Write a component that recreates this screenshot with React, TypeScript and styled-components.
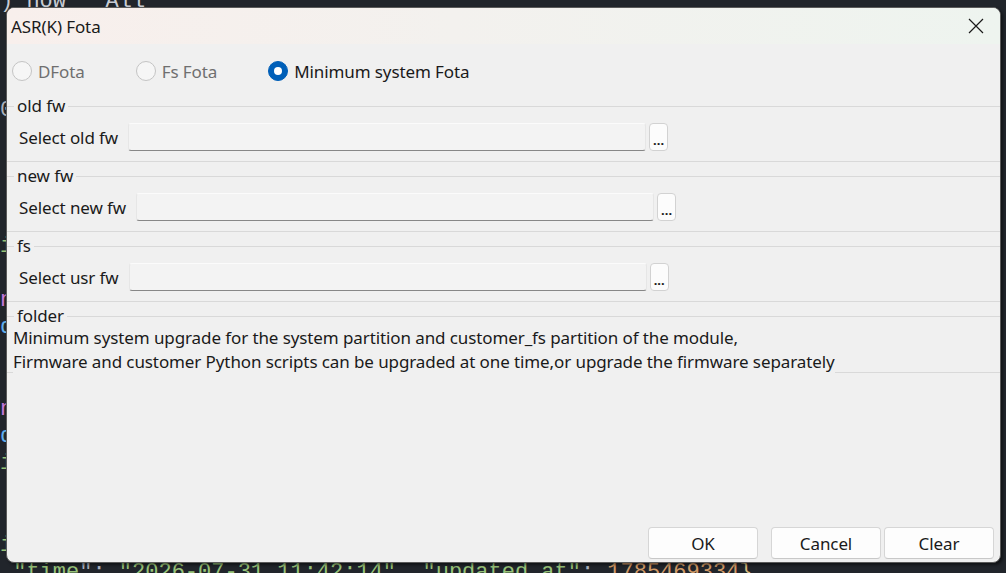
import React from 'react';
import styled, { createGlobalStyle } from 'styled-components';

const GlobalStyle = createGlobalStyle`
  html, body {
    margin: 0;
    padding: 0;
    background: #21252b;
  }
`;

const Desktop = styled.div`
  position: relative;
  width: 1006px;
  height: 573px;
  overflow: hidden;
  background: #21252b;
`;

const Editor = styled.pre`
  margin: -12px 0 0;
  font-family: "Liberation Mono", "DejaVu Sans Mono", monospace;
  font-size: 22px;
  line-height: 27.2px;
  color: #abb2bf;
  white-space: pre;
`;

const CodeLine = styled.div`
  height: 27.2px;
`;

const Token = styled.span<{ $c: string }>`
  color: ${p => p.$c};
`;

const Window = styled.div`
  position: absolute;
  left: 6px;
  top: 7px;
  width: 995px;
  height: 556px;
  box-sizing: border-box;
  border: 1px solid #5a5a5a;
  border-radius: 8px;
  background: #f0f0f0;
  box-shadow: 2px 2px 3px rgba(0, 0, 0, 0.5);
  overflow: hidden;
  display: flex;
  flex-direction: column;
  font-family: "Noto Sans", "Open Sans", sans-serif;
  font-size: 17px;
  letter-spacing: -0.1px;
  color: #1a1a1a;
`;

const TitleBar = styled.div`
  height: 36px;
  flex: none;
  display: flex;
  align-items: center;
  justify-content: space-between;
  padding: 0 16px 0 4px;
  background: linear-gradient(90deg, #f8efec 0%, #f3f1ee 45%, #eef4ef 100%);
`;

const CloseButton = styled.button`
  border: none;
  background: none;
  padding: 0;
  width: 16px;
  height: 16px;
  display: flex;
  color: #1a1a1a;
`;

const Body = styled.div`
  flex: 1;
  display: flex;
  flex-direction: column;
  padding: 15px 0 3px;
`;

const ModeRow = styled.div`
  display: flex;
  align-items: center;
  gap: 51px;
  height: 24px;
  padding-left: 5px;
  margin-bottom: 13px;
`;

const RadioItem = styled.label<{ $disabled?: boolean }>`
  display: flex;
  align-items: center;
  gap: 6px;
  color: ${p => (p.$disabled ? '#6f6f6f' : '#1a1a1a')};
`;

const RadioDot = styled.span<{ $checked?: boolean }>`
  width: 20px;
  height: 20px;
  box-sizing: border-box;
  border-radius: 50%;
  display: flex;
  align-items: center;
  justify-content: center;
  background: ${p => (p.$checked ? '#005fb8' : '#f6f6f6')};
  border: 1px solid ${p => (p.$checked ? '#005fb8' : '#c4c4c4')};

  &::after {
    content: '';
    width: 8px;
    height: 8px;
    border-radius: 50%;
    background: #ffffff;
    display: ${p => (p.$checked ? 'block' : 'none')};
  }
`;

const Group = styled.fieldset<{ $flush?: boolean }>`
  margin: 0;
  min-width: 0;
  padding: ${p => (p.$flush ? '0' : '7px 0 10px')};
  border: none;
  border-top: 1px solid #d9d9d9;
  border-bottom: 1px solid #d9d9d9;

  & + & {
    margin-top: 4px;
  }
`;

const GroupTitle = styled.legend`
  margin-left: 7px;
  padding: 0 3px;
  line-height: 20px;
`;

const FileRow = styled.div`
  display: flex;
  align-items: center;
  height: 28px;
  padding-left: 12px;
`;

const FieldLabel = styled.span`
  margin-right: 10px;
  white-space: nowrap;
`;

const PathInput = styled.div`
  width: 518px;
  height: 28px;
  box-sizing: border-box;
  background: #f3f3f3;
  border: 1px solid #e6e6e6;
  border-top-color: #fbfbfb;
  border-bottom-color: #878787;
  border-radius: 3px;
`;

const BrowseButton = styled.button`
  margin-left: 3px;
  width: 19px;
  height: 28px;
  padding: 0 0 5px;
  box-sizing: border-box;
  display: flex;
  align-items: flex-end;
  justify-content: center;
  background: #fcfcfc;
  border: 1px solid #d2d2d2;
  border-radius: 4px;
  font-family: "Noto Sans", sans-serif;
  font-size: 13px;
  font-weight: bold;
  line-height: 10px;
  color: #1a1a1a;
`;

const Note = styled.p`
  margin: 0 0 -2px 6px;
  width: fit-content;
  background: #f0f0f0;
  line-height: 24px;
`;

const Footer = styled.div`
  margin-top: auto;
  display: flex;
  justify-content: flex-end;
  gap: 3px;
  padding-right: 6px;
`;

const DialogButton = styled.button<{ $spaced?: boolean }>`
  width: 110px;
  height: 32px;
  margin-right: ${p => (p.$spaced ? '10px' : '0')};
  background: #fdfdfd;
  border: 1px solid #d6d6d6;
  border-bottom-color: #c8c8c8;
  border-radius: 4px;
  font-family: "Noto Sans", sans-serif;
  font-size: 17px;
  letter-spacing: -0.1px;
  color: #1a1a1a;
  padding: 0;
`;

type Seg = [string, string];

const plain = '#abb2bf';
const green = '#98c379';
const purple = '#c678dd';
const blue = '#61afef';
const orange = '#d19a66';

// editor buffer sitting behind the dialog
const codeLines: Seg[][] = [
  [[') now   All', '#c8ccd4']],
  [],
  [['    {', plain]],
  [['        "build": "', plain]],
  [['0', plain], [': {"id": 3, "state": "done"}', plain]],
  [],
  [['    }', plain]],
  [],
  [],
  [['i', green], ['mage = "fota_pkg.bin"', green]],
  [],
  [['n', purple], ['ew_fw = load("new")', plain]],
  [['d', blue], ['iff(old_fw, new_fw)', plain]],
  [],
  [],
  [['n', purple], ['ext = None', plain]],
  [['d', blue], ['one()', plain]],
  [['i', green], ['nfo = "ok"', green]],
  [],
  [],
  [['i', green], ['d = "fs"', green]],
  [
    [' "time', green],
    ['": ', plain],
    ['"2026-07-31 11:42:14"', green],
    [', ', plain],
    ['"updated_at"', green],
    [': ', plain],
    ['1785469334', orange],
    ['}', '#d7ba7d'],
  ],
];

const CloseIcon = () => (
  <svg width="16" height="16" viewBox="0 0 16 16" fill="none">
    <path d="M1 1 L15 15 M15 1 L1 15" stroke="currentColor" strokeWidth="1.2" />
  </svg>
);

const FileGroup = (props: { title: string; label: string }) => (
  <Group>
    <GroupTitle>{props.title}</GroupTitle>
    <FileRow>
      <FieldLabel>{props.label}</FieldLabel>
      <PathInput />
      <BrowseButton>...</BrowseButton>
    </FileRow>
  </Group>
);

const App = () => {
  return (
    <>
      <GlobalStyle />
      <Desktop>
        <Editor>
          {codeLines.map((line, i) => (
            <CodeLine key={i}>
              {line.map(([text, color], j) => (
                <Token key={j} $c={color}>{text}</Token>
              ))}
            </CodeLine>
          ))}
        </Editor>

        <Window>
          <TitleBar>
            <span>ASR(K) Fota</span>
            <CloseButton aria-label="Close">
              <CloseIcon />
            </CloseButton>
          </TitleBar>

          <Body>
            <ModeRow>
              <RadioItem $disabled>
                <RadioDot />
                DFota
              </RadioItem>
              <RadioItem $disabled>
                <RadioDot />
                Fs Fota
              </RadioItem>
              <RadioItem>
                <RadioDot $checked />
                Minimum system Fota
              </RadioItem>
            </ModeRow>

            <FileGroup title="old fw" label="Select old fw" />
            <FileGroup title="new fw" label="Select new fw" />
            <FileGroup title="fs" label="Select usr fw" />

            <Group $flush>
              <GroupTitle>folder</GroupTitle>
              <Note>
                Minimum system upgrade for the system partition and customer_fs partition of the module,
                <br />
                Firmware and customer Python scripts can be upgraded at one time,or upgrade the firmware separately
              </Note>
            </Group>

            <Footer>
              <DialogButton $spaced>OK</DialogButton>
              <DialogButton>Cancel</DialogButton>
              <DialogButton>Clear</DialogButton>
            </Footer>
          </Body>
        </Window>
      </Desktop>
    </>
  );
};

export default App;
